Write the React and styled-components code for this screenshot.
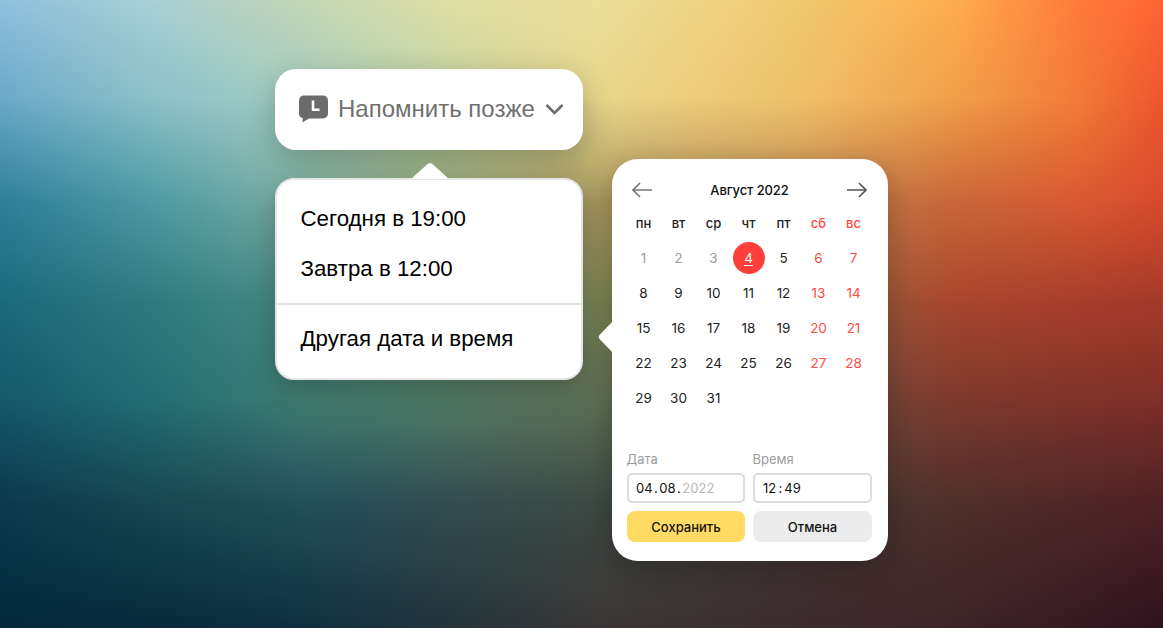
import React from "react";
import styled, { createGlobalStyle } from "styled-components";

const Global = createGlobalStyle`
  html, body { margin: 0; padding: 0; background: #222; }
  * { box-sizing: border-box; }
`;

const Scene = styled.div`
  position: relative;
  width: 1163px;
  height: 628px;
  overflow: hidden;
  display: flex;
  align-items: flex-start;
  padding: 69px 0 0 275px;
  gap: 29px;
  font-family: "Liberation Sans", Arial, sans-serif;
`;

const MeshBand = styled.div`
  position: absolute;
  inset: 0;
`;

const LeftColumn = styled.div`
  position: relative;
  width: 308px;
  display: flex;
  flex-direction: column;
  gap: 28px;
`;

const ReminderButton = styled.div`
  height: 81px;
  border-radius: 21px;
  background: #fff;
  display: flex;
  align-items: center;
  padding: 0 19px 1px 24px;
  color: #707070;
  font-size: 24px;
  box-shadow: 0 10px 30px rgba(30, 40, 30, 0.3);
`;

const ReminderLabel = styled.span`
  margin-left: 10px;
  flex: 1;
  white-space: nowrap;
`;

const Menu = styled.div`
  position: relative;
  background: #fff;
  border-radius: 19px;
  padding-top: 14px;
  height: 202px;
  border: 2px solid #e6e6e6;
  box-shadow: 0 10px 30px rgba(20, 30, 30, 0.3);
  font-size: 22.3px;
  color: #000;
`;

const MenuTail = styled.svg`
  position: absolute;
  left: 133px;
  top: -19px;
  display: block;
`;

const MenuItem = styled.div`
  height: 50px;
  display: flex;
  align-items: center;
  padding-left: 23.500px;
`;

const MenuDivider = styled.div`
  height: 2px;
  background: #e2e2e2;
  margin: 9px 0;
`;

const CalendarCard = styled.div`
  position: relative;
  margin-top: 90px;
  width: 276px;
  height: 402px;
  border-radius: 26px;
  background: #fff;
  padding: 14px 14px 0;
  box-shadow: 0 10px 30px rgba(10, 10, 10, 0.28);
  font-family: Inter, Roboto, sans-serif;
  color: #1a1a1a;
`;

const CardTail = styled.svg`
  position: absolute;
  left: -15px;
  top: 158px;
  display: block;
`;

const CalendarHeader = styled.div`
  height: 32px;
  display: flex;
  align-items: center;
  justify-content: space-between;
  padding: 2px 6px 0 5px;
  font-size: 13px;
  font-weight: 500;
  letter-spacing: -0.1px;
  color: #111;
`;

const DayGrid = styled.div`
  display: grid;
  grid-template-columns: repeat(7, 35px);
  grid-auto-rows: 35px;
  height: 210px;
  font-size: 13.500px;
`;

const DayCell = styled.div`
  display: flex;
  align-items: center;
  justify-content: center;
  color: ${(p) => p.$color};
`;

const WeekCell = styled(DayCell)`
  font-size: 13px;
  font-weight: 500;
`;

const TodayMark = styled.span`
  width: 32px;
  height: 32px;
  border-radius: 50%;
  background: #ff3f3a;
  color: #fff;
  display: flex;
  align-items: center;
  justify-content: center;
  text-decoration: underline;
  text-underline-offset: 2px;
`;

const FieldRow = styled.div`
  display: grid;
  grid-template-columns: 118px 119px;
  gap: 8px;
  margin-left: 1px;
  margin-top: 35px;
`;

const Field = styled.div`
  display: flex;
  flex-direction: column;
`;

const FieldLabel = styled.div`
  font-size: 13px;
  line-height: 18px;
  height: 23px;
  margin-left: -0.500px;
  color: #9c9c9c;
`;

const FieldBox = styled.div`
  height: 30px;
  border: 2px solid #dcdcdc;
  border-radius: 5px;
  display: flex;
  align-items: center;
  padding-left: ${(p) => p.$inset}px;
  font-size: 13px;
  color: #111;
`;

const Separator = styled.span`
  margin: 0 ${(p) => p.$gap}px;
`;

const Muted = styled.span`
  color: #b9b9b9;
`;

const ButtonRow = styled(FieldRow)`
  margin-top: 8px;
`;

const Action = styled.div`
  height: 31px;
  border-radius: 8px;
  background: ${(p) => (p.$primary ? "#ffdb63" : "#ececec")};
  display: flex;
  align-items: center;
  justify-content: center;
  font-size: 13px;
  font-weight: 500;
  color: #111;
`;

const Arrow = ({ right, color }) => (
  <svg width="22" height="16" viewBox="0 0 22 16" fill="none" stroke={color} strokeWidth="1.7" style={right ? { transform: "scaleX(-1)" } : undefined}>
    <path d="M21 8H2M9 1L2 8l7 7" />
  </svg>
);

const weeks = ["пн", "вт", "ср", "чт", "пт", "сб", "вс"];

const xs = [0, 150, 300, 450, 600, 800, 950, 1080, 1163];
const ys = [0, 100, 200, 300, 400, 500, 628];
const mesh = [
  ["#8fc1dd", "#a9cfd5", "#c3d6b5", "#dfe0a5", "#ecdf9a", "#f0c96e", "#ffae50", "#ff7a3a", "#ff6535"],
  ["#6ba8c6", "#8bc0c8", "#a5cdc0", "#c5d3a0", "#e8d68a", "#eec06a", "#f0a04a", "#f27a38", "#ec5530"],
  ["#2e8098", "#4f9aa4", "#7cae9f", "#96a878", "#ab9a60", "#c08850", "#c8683a", "#d85a32", "#d84a2c"],
  ["#1a6a7a", "#2f7a80", "#4a8a80", "#60856a", "#7d8555", "#8f6a44", "#a8472e", "#a83e2c", "#a33a2a"],
  ["#16586a", "#236c74", "#3f7d70", "#527a66", "#606f56", "#6c5240", "#7d3a2e", "#7e332a", "#7e2f28"],
  ["#0c3a4e", "#174852", "#24505a", "#344e50", "#3f4a44", "#483c38", "#50302c", "#50282a", "#4f2226"],
  ["#04283c", "#082a3c", "#0f3040", "#24343a", "#3b3636", "#3c2c2e", "#3d2428", "#351a22", "#2e121d"],
];

const bandStyle = (row, i) => {
  const stops = row.map((c, k) => `${c} ${xs[k]}px`).join(", ");
  const mask = i === 0 ? "none" : `linear-gradient(180deg, transparent ${ys[i - 1]}px, #000 ${ys[i]}px)`;
  return {
    background: `linear-gradient(90deg, ${stops})`,
    WebkitMaskImage: mask,
    maskImage: mask,
  };
};

export default function App() {
  const days = [];
  for (let d = 1; d <= 31; d++) days.push(d);
  return (
    <Scene>
      <Global />
      {mesh.map((row, i) => (
        <MeshBand key={i} style={bandStyle(row, i)} />
      ))}
      <LeftColumn>
        <ReminderButton>
          <svg width="29" height="28" viewBox="0 0 29 28">
            <path fill="#6b6b6b" d="M5 0.500h19a5 5 0 0 1 5 5v13a5 5 0 0 1-5 5H10L3.300 27.500 3.800 23.200A5 5 0 0 1 0 18.500v-13a5 5 0 0 1 5-5z" />
            <path fill="none" stroke="#fff" strokeWidth="2.600" d="M14 5.500V14.800H20.500" />
          </svg>
          <ReminderLabel>Напомнить позже</ReminderLabel>
          <svg width="19" height="12" viewBox="0 0 19 12" fill="none" stroke="#6b6b6b" strokeWidth="2.500">
            <path d="M1.500 2l8 8 8-8" />
          </svg>
        </ReminderButton>
        <Menu>
          <MenuTail width="40" height="18" viewBox="0 0 40 18">
            <path fill="#fff" d="M1 18L17 3.500a4 4 0 0 1 6 0L39 18z" />
          </MenuTail>
          <MenuItem>Сегодня в 19:00</MenuItem>
          <MenuItem>Завтра в 12:00</MenuItem>
          <MenuDivider />
          <MenuItem>Другая дата и время</MenuItem>
        </Menu>
      </LeftColumn>
      <CalendarCard>
        <CardTail width="16" height="40" viewBox="0 0 16 40">
          <path fill="#fff" d="M16 4L3 17.500a3.500 3.500 0 0 0 0 5L16 36z" />
        </CardTail>
        <CalendarHeader>
          <Arrow color="#777" />
          <span>Август 2022</span>
          <Arrow right color="#555" />
        </CalendarHeader>
        <DayGrid>
          {weeks.map((w, i) => (
            <WeekCell key={w} $color={i > 4 ? "#ff4a45" : "#222"}>{w}</WeekCell>
          ))}
          {days.map((d) => {
            const col = (d - 1) % 7;
            const weekend = col === 5 || col === 6;
            const color = d < 4 ? "#9b9b9b" : weekend ? "#ff4a45" : "#222";
            return (
              <DayCell key={d} $color={color}>
                {d === 4 ? <TodayMark>4</TodayMark> : d}
              </DayCell>
            );
          })}
        </DayGrid>
        <FieldRow>
          <Field>
            <FieldLabel>Дата</FieldLabel>
            <FieldBox $inset={7}>04<Separator $gap={1.5}>.</Separator>08<Separator $gap={1.5}>.</Separator><Muted>2022</Muted></FieldBox>
          </Field>
          <Field>
            <FieldLabel>Время</FieldLabel>
            <FieldBox $inset={8}>12<Separator $gap={2.2}>:</Separator>49</FieldBox>
          </Field>
        </FieldRow>
        <ButtonRow>
          <Action $primary>Сохранить</Action>
          <Action>Отмена</Action>
        </ButtonRow>
      </CalendarCard>
    </Scene>
  );
}
